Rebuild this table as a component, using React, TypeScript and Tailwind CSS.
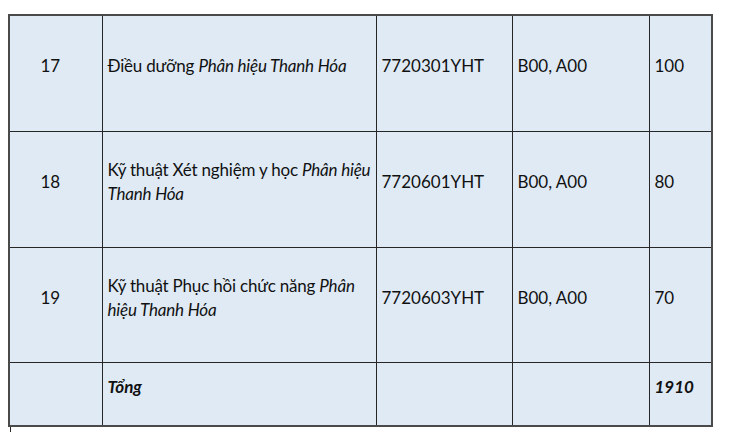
import React from "react";

const cell = "border border-[#262626] align-middle px-[5px] pb-[14px] pt-0";

export default function App() {
  const rows = [
    {
      n: "17",
      h: "h-[116px]",
      name: [
        <>
          Điều dưỡng <i>Phân hiệu Thanh Hóa</i>
        </>,
      ],
      code: "7720301YHT",
      sub: "B00, A00",
      q: "100",
    },
    {
      n: "18",
      h: "h-[116px]",
      name: [
        <>
          Kỹ thuật Xét nghiệm y học <i>Phân hiệu</i>
        </>,
        <i>Thanh Hóa</i>,
      ],
      code: "7720601YHT",
      sub: "B00, A00",
      q: "80",
    },
    {
      n: "19",
      h: "h-[115px]",
      name: [
        <>
          Kỹ thuật Phục hồi chức năng <i>Phân</i>
        </>,
        <i>hiệu Thanh Hóa</i>,
      ],
      code: "7720603YHT",
      sub: "B00, A00",
      q: "70",
    },
  ];
  return (
    <div
      className="w-[730px] h-[432px] bg-white overflow-hidden pt-[14px] pl-[8px] text-[17px] leading-[24px] text-[#111]"
      style={{ fontFamily: "Lato, 'Open Sans', sans-serif" }}
    >
      <table className="table-fixed border-collapse border-2 border-[#4a4a4a] bg-[#dfeaf5] w-[703px]">
        <colgroup>
          <col className="w-[93px]" />
          <col className="w-[274px]" />
          <col className="w-[136px]" />
          <col className="w-[137px]" />
          <col className="w-[63px]" />
        </colgroup>
        <tbody>
          {rows.map((r) => (
            <tr key={r.n} className={r.h}>
              <td className={`${cell} text-center pr-[16px]`}>{r.n}</td>
              <td className={`${cell} pr-0`}>
                {r.name.map((l, i) => (
                  <div key={i} className="whitespace-nowrap tracking-[-0.2px]">
                    {l}
                  </div>
                ))}
              </td>
              <td className={cell}>{r.code}</td>
              <td className={cell}>{r.sub}</td>
              <td className={cell}>{r.q}</td>
            </tr>
          ))}
          <tr className="h-[64px]">
            <td className={cell}></td>
            <td className={`${cell} font-bold italic`}>Tổng</td>
            <td className={cell}></td>
            <td className={cell}></td>
            <td className={`${cell} font-bold italic`}>1910</td>
          </tr>
        </tbody>
      </table>
      <div className="ml-[2px] h-[20px] border-l border-[#262626]"></div>
    </div>
  );
}
